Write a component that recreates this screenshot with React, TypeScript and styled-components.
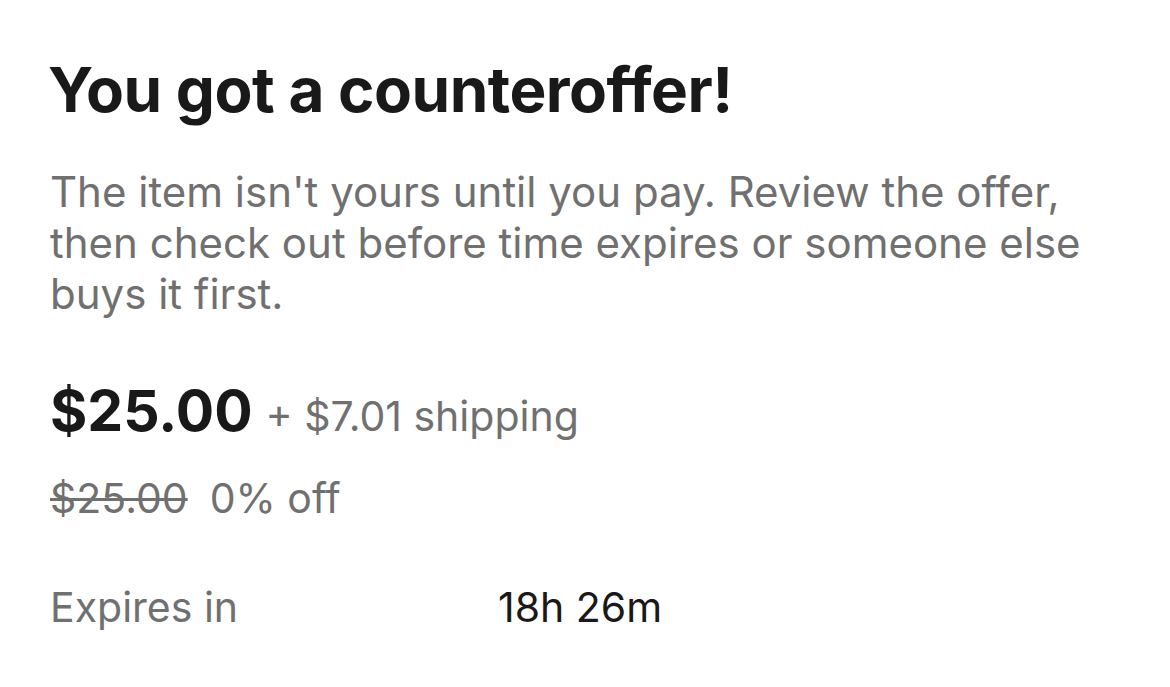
import React from "react";
import styled, { createGlobalStyle } from "styled-components";

const Global = createGlobalStyle`
  html, body { margin: 0; padding: 0; background: #ffffff; }
  body { font-family: Inter, "Liberation Sans", sans-serif; }
`;

const Page = styled.main`
  width: 1170px;
  height: 687px;
  box-sizing: border-box;
  padding: 54px 50px 0 50px;
  display: flex;
  flex-direction: column;
  background: #fff;
  overflow: hidden;
`;

const Title = styled.h1`
  margin: 0 0 0 -2px;
  font-size: 62px;
  line-height: 72px;
  font-weight: 700;
  color: #191919;
  letter-spacing: -0.5px;
`;

const Lead = styled.p`
  margin: 40px 0 0 0;
  font-size: 42px;
  line-height: 51px;
  font-weight: 400;
  color: #707070;
  max-width: 1075px;
`;

const PriceRow = styled.div`
  margin-top: 60px;
  display: flex;
  align-items: baseline;
  gap: 13px;
  line-height: 64px;
`;

const Price = styled.span`
  font-size: 57px;
  font-weight: 700;
  color: #191919;
`;

const Shipping = styled.span`
  font-size: 41px;
  color: #707070;
`;

const DiscountRow = styled.div`
  margin-top: 24px;
  display: flex;
  align-items: baseline;
  gap: 22px;
  font-size: 41px;
  line-height: 52px;
  color: #707070;
`;

const Struck = styled.s`
  text-decoration-thickness: 3px;
`;

const DetailRow = styled.div`
  margin-top: 57px;
  display: grid;
  grid-template-columns: 448px 1fr;
  font-size: 41px;
  line-height: 52px;
`;

const Label = styled.span`
  color: #707070;
`;

const Value = styled.span`
  color: #191919;
`;

export default function App() {
  return (
    <>
      <Global />
      <Page>
        <Title>You got a counteroffer!</Title>
        <Lead>
          The item isn't yours until you pay. Review the offer, then check out
          before time expires or someone else buys it first.
        </Lead>
        <PriceRow>
          <Price>$25.00</Price>
          <Shipping>+ $7.01 shipping</Shipping>
        </PriceRow>
        <DiscountRow>
          <Struck>$25.00</Struck>
          <span>0% off</span>
        </DiscountRow>
        <DetailRow>
          <Label>Expires in</Label>
          <Value>18h 26m</Value>
        </DetailRow>
      </Page>
    </>
  );
}
